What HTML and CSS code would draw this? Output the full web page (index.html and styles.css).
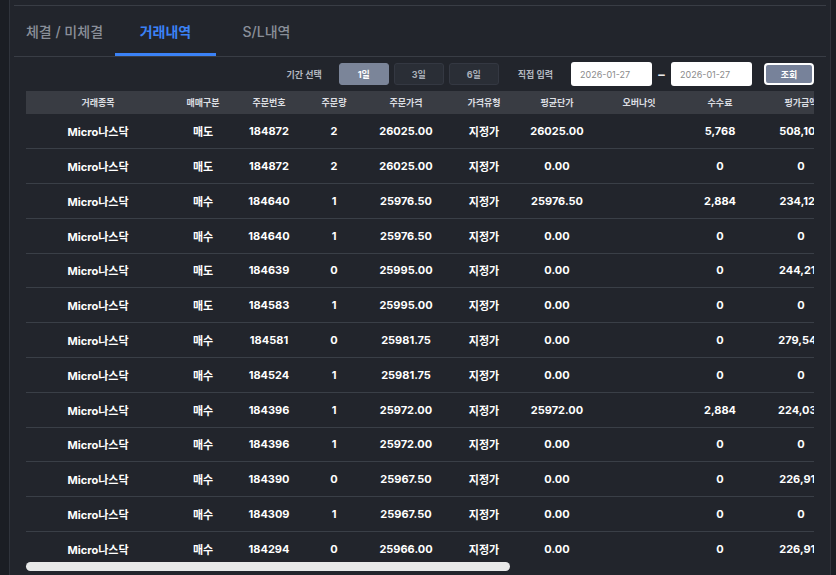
FILE: index.html
```html
<!DOCTYPE html>
<html lang="ko">
<head>
    <meta charset="UTF-8">
    <title>거래내역</title>
    <link rel="stylesheet" href="styles.css">
</head>
<body>
<div class="panel">
    <div class="topline"></div>
    <ul class="tabs">
        <li>체결 / 미체결</li>
        <li class="active">거래내역</li>
        <li>S/L내역</li>
    </ul>
    <div class="filter">
        <span class="label">기간 선택</span>
        <button class="period on">1일</button>
        <button class="period">3일</button>
        <button class="period">6일</button>
        <span class="label direct">직접 입력</span>
        <input class="date" type="text" value="2026-01-27">
        <span class="dash">&ndash;</span>
        <input class="date" type="text" value="2026-01-27">
        <button class="search">조회</button>
    </div>
    <div class="table-wrap">
        <table class="list">
            <colgroup>
                <col style="width:144px"><col style="width:66px"><col style="width:66px"><col style="width:64px">
                <col style="width:80px"><col style="width:76px"><col style="width:70px"><col style="width:94px">
                <col style="width:68px"><col style="width:94px"><col style="width:92px"><col style="width:140px">
                <col style="width:140px"><col style="width:96px">
            </colgroup>
            <thead>
            <tr>
                <th>거래종목</th><th>매매구분</th><th>주문번호</th><th>주문량</th><th>주문가격</th>
                <th>가격유형</th><th>평균단가</th><th>오버나잇</th><th>수수료</th><th>평가금액</th>
                <th>실현손익</th><th>주문시간</th><th>체결시간</th><th>상태</th>
            </tr>
            </thead>
            <tbody id="rows"></tbody>
        </table>
    </div>
    <div class="hscroll"><div class="thumb"></div></div>
</div>
<script type="text/javascript">
    var data = [
        ["매도","184872","2","26025.00","26025.00","5,768","508,100"],
        ["매도","184872","2","26025.00","0.00","0","0"],
        ["매수","184640","1","25976.50","25976.50","2,884","234,120"],
        ["매수","184640","1","25976.50","0.00","0","0"],
        ["매도","184639","0","25995.00","0.00","0","244,210"],
        ["매도","184583","1","25995.00","0.00","0","0"],
        ["매수","184581","0","25981.75","0.00","0","279,540"],
        ["매수","184524","1","25981.75","0.00","0","0"],
        ["매수","184396","1","25972.00","25972.00","2,884","224,030"],
        ["매수","184396","1","25972.00","0.00","0","0"],
        ["매수","184390","0","25967.50","0.00","0","226,910"],
        ["매수","184309","1","25967.50","0.00","0","0"],
        ["매수","184294","0","25966.00","0.00","0","226,910"]
    ];
    var html = "";
    for (var i = 0; i < data.length; i++) {
        var d = data[i];
        html += "<tr><td>Micro나스닥</td><td>" + d[0] + "</td><td>" + d[1] + "</td><td>" + d[2] +
            "</td><td>" + d[3] + "</td><td>지정가</td><td>" + d[4] + "</td><td></td><td>" + d[5] +
            "</td><td>" + d[6] + "</td><td>0</td><td>2026-01-27 09:12</td><td>2026-01-27 09:12</td><td>체결</td></tr>";
    }
    document.getElementById("rows").innerHTML = html;
</script>
</body>
</html>
```

FILE: styles.css
```css
html,body,ul,li{
    margin:0;
    padding:0;
}
ul{
    list-style-type:none;
}
body{
    background:#1b1e24;
    font-family:Inter,"Noto Sans CJK KR",sans-serif;
    color:#fff;
    height:575px;
    overflow:hidden;
}
.panel{
    margin-left:9px;
    width:822px;
    height:575px;
    background:#22252c;
    border-left:1px solid #30343c;
    border-right:1px solid #30343c;
    padding-top:5px;
    box-sizing:border-box;
}
.topline{
    margin:0 4px;
    border-top:1px solid #393d45;
}
.tabs{
    display:flex;
    margin:0 4px;
    height:50px;
    border-bottom:1px solid #393d45;
}
.tabs li{
    position:relative;
    width:101px;
    display:flex;
    align-items:center;
    justify-content:center;
    font-size:14px;
    font-weight:500;
    color:#8a8f99;
}
.tabs li.active{
    color:#3b82f6;
    font-weight:700;
}
.tabs li.active:after{
    content:"";
    position:absolute;
    left:0;
    right:0;
    bottom:0;
    height:3px;
    background:#3b82f6;
}
.filter{
    display:flex;
    align-items:center;
    justify-content:flex-end;
    height:34px;
    margin:0 16px;
    font-size:9px;
}
.filter .label{
    color:#b4b8c0;
    font-weight:700;
    margin-right:17px;
}
.filter .direct{
    margin-left:14px;
    margin-right:18px;
}
.period{
    width:50px;
    height:22px;
    margin-right:5px;
    border:1px solid #343842;
    border-radius:3px;
    background:#2a2e36;
    color:#a9aeb8;
    font:700 9px Inter,"Noto Sans CJK KR",sans-serif;
    padding:0;
}
.period.on{
    background:#7b8599;
    border-color:#7b8599;
    color:#fff;
}
.date{
    width:81px;
    height:24px;
    box-sizing:border-box;
    border:none;
    border-radius:3px;
    background:#fff;
    color:#8a8a8a;
    font:400 9px Inter,"Noto Sans CJK KR",sans-serif;
    padding:0 0 0 9px;
    outline:none;
}
.dash{
    width:19px;
    text-align:center;
    color:#e8e8e8;
    font-size:13px;
    font-weight:700;
}
.search{
    width:50px;
    height:22px;
    margin-left:12px;
    border:2px solid #fff;
    border-radius:4px;
    background:#77829a;
    color:#fff;
    font:700 9px Inter,"Noto Sans CJK KR",sans-serif;
    padding:0;
}
.table-wrap{
    margin:0 16px;
    height:471px;
    overflow:hidden;
}
.hscroll{
    margin:0 16px;
    height:9px;
}
.hscroll .thumb{
    width:484px;
    height:9px;
    background:#e8e9e9;
    border-radius:5px;
}
.list{
    width:1290px;
    table-layout:fixed;
    border-collapse:separate;
    border-spacing:0;
}
.list th{
    height:23.4px;
    padding:0;
    background:#393c43;
    color:#dcdee2;
    font-size:9px;
    font-weight:700;
    white-space:nowrap;
}
.list td{
    height:33.8px;
    padding:0;
    border-bottom:1px solid #3a3f47;
    text-align:center;
    font-size:11px;
    font-weight:700;
    white-space:nowrap;
}
```
